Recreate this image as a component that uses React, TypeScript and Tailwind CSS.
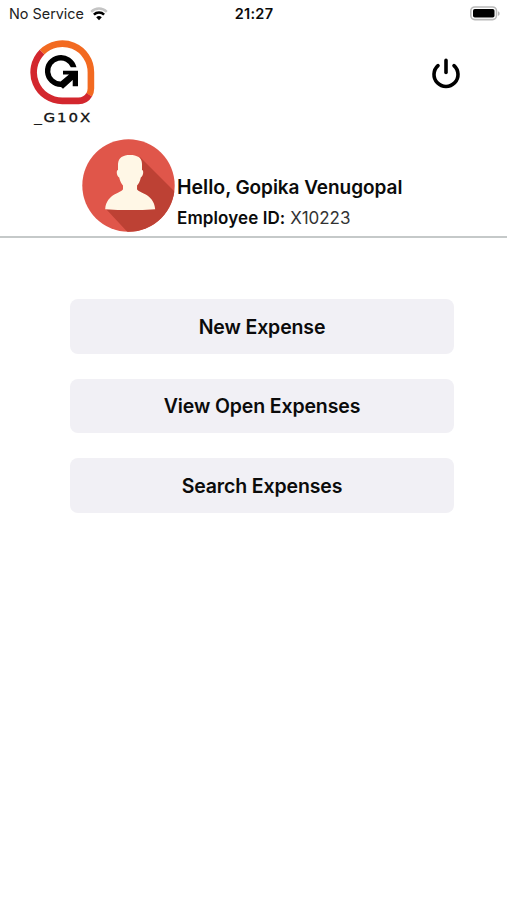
interface Employee {
  name: string;
  id: string;
}

const employee: Employee = { name: "Gopika Venugopal", id: "X10223" };

const actions = ["New Expense", "View Open Expenses", "Search Expenses"];

function WifiIcon() {
  return (
    <svg width="18" height="14" viewBox="0 0 18 14" fill="none">
      <path d="M1.2 4.8a11 11 0 0 1 15.6 0" stroke="#c4c4c4" strokeWidth="2.4" />
      <path d="M3.9 7.7a7.2 7.2 0 0 1 10.2 0" stroke="#000" strokeWidth="2.5" />
      <path d="M9 13.2 6.2 10.3a4 4 0 0 1 5.6 0Z" fill="#000" />
    </svg>
  );
}

function BatteryIcon() {
  return (
    <svg width="32" height="15" viewBox="0 0 32 15">
      <rect x="1.8" y="1" width="25.7" height="12.6" rx="4" fill="#fff" stroke="#b9b9b9" strokeWidth="1.6" />
      <rect x="4" y="3" width="21.5" height="8.6" rx="1.8" fill="#000" />
      <path d="M29 5.2c2.2.8 2.2 3.8 0 4.6Z" fill="#b5b5b5" />
    </svg>
  );
}

function StatusBar() {
  return (
    <div className="grid h-7 grid-cols-3 items-center pl-[9px] pr-[6px]">
      <div className="flex items-center gap-[6px] text-[14.4px] text-[#222]">
        <span>No Service</span>
        <WifiIcon />
      </div>
      <span className="pr-[2px] text-center text-[14.5px] font-semibold tracking-[0.3px]">21:27</span>
      <div className="flex justify-end pb-[1px]">
        <BatteryIcon />
      </div>
    </div>
  );
}

function Logo() {
  return (
    <div className="flex w-[65px] flex-col items-center">
      <svg width="65" height="65" viewBox="0 0 65 65" fill="none">
        <path
          d="M12 12.1A28.6 28.6 0 0 1 60.9 32.3V48.5A12.4 12.4 0 0 1 59.2 54.8"
          stroke="#f26a21"
          strokeWidth="6.6"
        />
        <path
          d="M12 12.1A28.6 28.6 0 0 0 32.3 60.9H48.5A12.4 12.4 0 0 0 59.2 54.8"
          stroke="#d3272e"
          strokeWidth="6.6"
        />
        <path
          d="M46.5 27.3A16 16 0 1 0 31 47L33 48.8 42.7 40V46.3H48V30.7H33V34.6H39L30.6 41.6A10.6 10.6 0 1 1 40.8 27.3Z"
          fill="#000"
        />
      </svg>
      <span className="mt-[5px] ml-[1px] scale-x-125 font-['DejaVu_Sans',sans-serif] text-[12px] leading-[16px] tracking-[1.5px] text-[#111] [-webkit-text-stroke:0.3px_#111]">
        _G10X
      </span>
    </div>
  );
}

function PowerIcon() {
  return (
    <svg width="30" height="32" viewBox="0 0 30 32" fill="none" stroke="#000" strokeWidth="3.6" strokeLinecap="round">
      <path d="M15 3.4V15.4" />
      <path d="M7 8.6A12 12 0 1 0 23 8.6" />
    </svg>
  );
}

function Avatar() {
  return (
    <svg width="93" height="93" viewBox="0 0 93 93">
      <defs>
        <clipPath id="avatar-circle">
          <circle cx="46.5" cy="46.5" r="46.2" />
        </clipPath>
      </defs>
      <g clipPath="url(#avatar-circle)">
        <rect width="93" height="93" fill="#e0564a" />
        <path d="M58 18 100 60V100H52L24 70 54 62Z" fill="#bd4134" />
      </g>
      <path
        d="M48 16C41 16 36.5 18.5 36 25V31C34 31 34.5 37 37.2 38.5C38 42.5 39.8 45 41 46.5V50C40.5 54 24.5 54 23.2 70.2Q48 72 73.2 70.2C72 54 55.5 54 55 50V46.5C56.5 45 58 42.5 58.8 38.5C61.5 37 62 31 60 31V25C60 18.5 55 16 48 16Z"
        fill="#fff7e6"
      />
    </svg>
  );
}

function Header() {
  return (
    <header className="h-[210px] border-b-2 border-[#c5c9c9] pt-3">
      <div className="flex items-start justify-between pl-[30px] pr-[46px]">
        <Logo />
        <button className="mt-[17px]" aria-label="Sign out">
          <PowerIcon />
        </button>
      </div>
      <div className="mt-[13px] flex pl-[81.5px]">
        <Avatar />
        <div className="ml-[2.5px] pt-[33.5px] whitespace-nowrap">
          <p className="flex items-baseline gap-[4px] text-[19px] leading-[28px] font-semibold">
            <span className="text-[19.5px]">Hello,</span>
            <span className="tracking-[-0.05px]">{employee.name}</span>
          </p>
          <p className="mt-[3px] text-[17px] leading-[26px]">
            <span className="font-semibold tracking-[0.1px]">Employee ID:</span>{" "}
            <span className="tracking-[-0.05px] text-[#333]">{employee.id}</span>
          </p>
        </div>
      </div>
    </header>
  );
}

export default function App() {
  return (
    <div className="min-h-screen bg-white font-['Inter',sans-serif] text-[#0b0b0b]">
      <StatusBar />
      <Header />
      <main className="flex flex-col gap-[25px] pt-[61px] pr-[53px] pl-[70px]">
        {actions.map((label) => (
          <button
            key={label}
            className="h-[54.5px] rounded-lg bg-[#f1f0f5] pt-[2px] text-[19.5px] font-semibold tracking-[-0.13px]"
          >
            {label}
          </button>
        ))}
      </main>
    </div>
  );
}
